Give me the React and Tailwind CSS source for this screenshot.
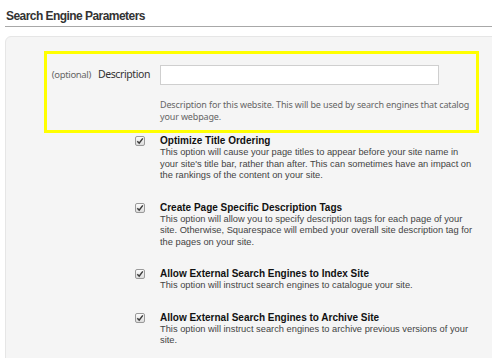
import React from "react";

const options = [
  {
    title: "Optimize Title Ordering",
    lines: [
      "This option will cause your page titles to appear before your site name in",
      "your site's title bar, rather than after. This can sometimes have an impact on",
      "the rankings of the content on your site.",
    ],
  },
  {
    title: "Create Page Specific Description Tags",
    lines: [
      "This option will allow you to specify description tags for each page of your",
      "site. Otherwise, Squarespace will embed your overall site description tag for",
      "the pages on your site.",
    ],
  },
  {
    title: "Allow External Search Engines to Index Site",
    lines: ["This option will instruct search engines to catalogue your site."],
  },
  {
    title: "Allow External Search Engines to Archive Site",
    lines: [
      "This option will instruct search engines to archive previous versions of your",
      "site.",
    ],
  },
];

function Check() {
  return (
    <div className="w-[10px] h-[10px] mt-[1px] rounded-[2px] border border-[#9a9a9a] bg-gradient-to-b from-[#fcfcfc] to-[#dcdcdc] flex items-center justify-center">
      <svg width="8" height="8" viewBox="0 0 8 8">
        <path d="M1.3 4.2 L3.2 6.2 L6.8 1.4" fill="none" stroke="#3a3a3a" strokeWidth="1.5" />
      </svg>
    </div>
  );
}

export default function App() {
  return (
    <div className="w-[492px] h-[358px] bg-white overflow-hidden" style={{ fontFamily: "'Liberation Sans', Arial, sans-serif" }}>
      <div className="ml-[5px] pt-[9px] pb-[3px] border-b border-[#a8a8a8]">
        <h2 className="pl-[1px] text-[12px] font-bold text-[#333] tracking-[-0.55px] leading-[14px]">Search Engine Parameters</h2>
      </div>

      <div className="ml-[5px] mt-[9px] w-[520px] h-[340px] rounded-tl-[6px] border border-[#e6e6e6] bg-[#f5f5f5] pt-[14px]">
        <div className="ml-[38px] w-[435px] h-[82px] border-[3px] border-[#ffff00] pt-[11px]" style={{ fontFamily: "'Noto Sans', 'DejaVu Sans', sans-serif" }}>
          <div className="flex items-center">
            <div className="w-[103px] flex justify-end items-center gap-[7px]">
              <span className="text-[9.5px] tracking-[-0.35px] text-[#666]">(optional)</span>
              <span className="text-[10.5px] tracking-[-0.4px] text-[#333]">Description</span>
            </div>
            <input type="text" className="ml-[10px] w-[279px] h-[20px] bg-white border border-[#cfcfcf]" />
          </div>
          <p className="ml-[113px] mt-[14px] text-[9px] tracking-[-0.15px] leading-[12px] text-[#666] whitespace-nowrap">
            Description for this website. This will be used by search engines that catalog
            <br />
            your webpage.
          </p>
        </div>

        <div className="mt-[2px] flex flex-col gap-[20px]">
          {options.map((o) => (
            <div key={o.title} className="flex">
              <div className="w-[154px] flex justify-end pr-[15px]">
                <Check />
              </div>
              <div className="whitespace-nowrap">
                <div className="text-[10px] font-bold text-[#111] leading-[12px]">{o.title}</div>
                <p className="text-[9.3px] text-[#444] leading-[11.5px]">
                  {o.lines.map((l) => (
                    <span key={l} className="block">{l}</span>
                  ))}
                </p>
              </div>
            </div>
          ))}
        </div>
      </div>
    </div>
  );
}
